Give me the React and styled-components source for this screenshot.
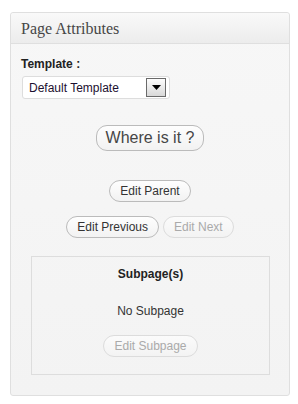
import React from 'react';
import styled, { createGlobalStyle } from 'styled-components';

const GlobalStyle = createGlobalStyle`
  body {
    margin: 0;
    background: #ffffff;
    font-family: 'Liberation Sans', Arial, sans-serif;
    font-size: 12px;
    color: #333333;
  }
`;

export default function App() {
  return (
    <>
      <GlobalStyle />
      <StyledPanel>
        <StyledHeader>
          <h3>Page Attributes</h3>
        </StyledHeader>
        <StyledBody>
          <Label>Template :</Label>
          <FakeSelect>
            <span>Default Template</span>
            <SelectArrow>
              <svg width='9' height='5' viewBox='0 0 9 5'>
                <path d='M0 0h9L4.5 5z' fill='#000' />
              </svg>
            </SelectArrow>
          </FakeSelect>

          <Row $top={26}>
            <Button $big>Where is it ?</Button>
          </Row>
          <Row $top={29}>
            <Button>Edit Parent</Button>
          </Row>
          <Row $top={14}>
            <Button>Edit Previous</Button>
            <Button disabled>Edit Next</Button>
          </Row>

          <SubpageBox>
            <h4>Subpage(s)</h4>
            <p>No Subpage</p>
            <Row $top={16}>
              <Button disabled>Edit Subpage</Button>
            </Row>
          </SubpageBox>
        </StyledBody>
      </StyledPanel>
    </>
  );
}

const StyledPanel = styled.div`
  box-sizing: border-box;
  width: 280px;
  margin: 12px 0 0 10px;
  border: 1px solid #dfdfdf;
  border-radius: 3px;
  background: linear-gradient(#f7f7f7, #f3f3f3);
`;

const StyledHeader = styled.div`
  height: 30px;
  padding: 0 10px;
  border-bottom: 1px solid #dfdfdf;
  border-radius: 3px 3px 0 0;
  background: linear-gradient(#f9f9f9, #ececec);

  h3 {
    margin: 0;
    font-family: 'Liberation Serif', 'Times New Roman', serif;
    font-weight: normal;
    font-size: 16px;
    line-height: 31px;
    color: #464646;
  }
`;

const StyledBody = styled.div`
  padding: 12px 10px 20px;
`;

const Label = styled.div`
  font-weight: bold;
  line-height: 16px;
  color: #222222;
`;

const FakeSelect = styled.div`
  box-sizing: border-box;
  width: 148px;
  height: 23px;
  margin: 4px 0 0 1px;
  padding: 0 3px 0 6px;
  display: flex;
  align-items: center;
  justify-content: space-between;
  background: #ffffff;
  border: 1px solid #dddddd;
  border-radius: 3px;
  color: #1c1030;
`;

const SelectArrow = styled.div`
  box-sizing: border-box;
  width: 20px;
  height: 19px;
  display: flex;
  align-items: center;
  justify-content: center;
  border: 1px solid #6a6a6a;
  background: linear-gradient(#fdfdfd, #d8d8d8);
`;

const Row = styled.div`
  display: flex;
  justify-content: center;
  gap: 4px;
  margin-top: ${({ $top }) => $top}px;
`;

const Button = styled.button`
  box-sizing: border-box;
  height: ${({ $big }) => ($big ? 26 : 22)}px;
  padding: 0 ${({ $big }) => ($big ? 9 : 10)}px;
  font-family: 'Liberation Sans', Arial, sans-serif;
  font-size: ${({ $big }) => ($big ? 16 : 12)}px;
  color: ${({ $big }) => ($big ? '#464646' : '#333333')};
  background: linear-gradient(#fefefe, #f2f2f2);
  border: 1px solid #bbbbbb;
  border-radius: 11px;
  cursor: pointer;

  &:disabled {
    color: #aaaaaa;
    border-color: #dcdcdc;
    background: linear-gradient(#fbfbfb, #f3f3f3);
    cursor: default;
  }
`;

const SubpageBox = styled.div`
  margin: 18px 9px 0 10px;
  padding: 9px 0 17px;
  border: 1px solid #dddddd;
  text-align: center;

  h4 {
    margin: 0;
    font-size: 12px;
    line-height: 16px;
    color: #222222;
  }

  p {
    margin: 21px 0 0;
    line-height: 16px;
    color: #333333;
  }
`;
